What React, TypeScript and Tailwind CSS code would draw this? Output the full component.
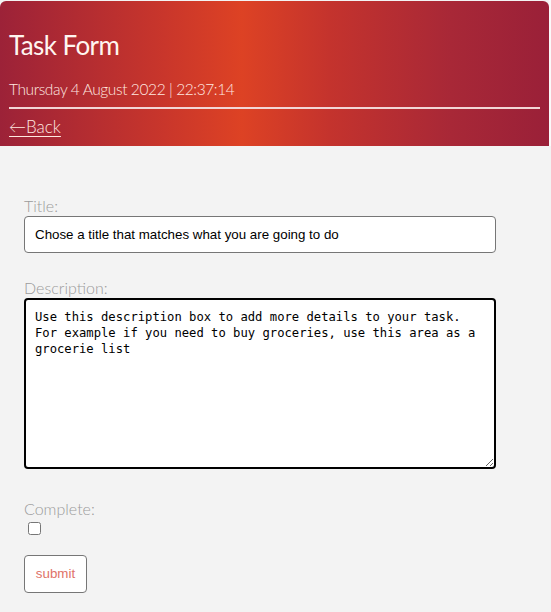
import React from "react";

export default function App() {
  const raleway = { fontFamily: "Lato, 'Open Sans', sans-serif" };
  return (
    <div className="w-[551px] h-[612px] bg-[#f3f3f3] overflow-hidden">
      <div className="flex">
        <div
          className="w-[549px] h-[145px] mt-px rounded-t-[6px] bg-[linear-gradient(90deg,#9c2238_0%,#c9362b_30%,#dd4224_44%,#c4332d_60%,#a82837_82%,#9a2038_100%)] pl-[9px] pr-[9px] pt-[28px] text-white"
          style={raleway}
        >
          <h1 className="text-[26px] font-normal leading-[32px] tracking-[-0.6px] text-[#fff5f0]">Task Form</h1>
          <div className="mt-[18px] text-[15.5px] font-light leading-[20px] tracking-[-0.4px] text-[#ffe8e0]">
            Thursday 4 August 2022 | 22:37:14
          </div>
          <div className="mt-[8px] h-[2px] bg-[#f2d6d6]" />
          <a href="#" className="block mt-[7px] text-[17px] font-light leading-[22px] underline underline-offset-[3px] text-[#ffe8e0]">
            ←Back
          </a>
        </div>
        <div className="w-[2px] bg-[#fafafa]" />
      </div>
      <form className="pl-[24px] pt-[50px] w-[520px]" onSubmit={(e) => e.preventDefault()}>
        <label className="block text-[16px] font-light leading-[20px] text-[#9b9b9b]" style={raleway}>
          Title:
        </label>
        <input
          type="text"
          defaultValue="Chose a title that matches what you are going to do"
          className="block w-[472px] h-[37px] border border-[#767676] rounded-[4px] bg-white px-[10px] text-[13.33px] text-black"
          style={{ fontFamily: "'Liberation Sans', Arial, sans-serif" }}
        />
        <label className="block mt-[25px] text-[16px] font-light leading-[20px] text-[#9b9b9b]" style={raleway}>
          Description:
        </label>
        <textarea
          defaultValue={
            "Use this description box to add more details to your task.\nFor example if you need to buy groceries, use this area as a\ngrocerie list"
          }
          className="block w-[472px] h-[171px] border-2 border-black rounded-[4px] bg-white px-[9px] pt-[9px] text-[12.2px] leading-[16px] text-black outline-none resize-y"
          style={{ fontFamily: "'DejaVu Sans Mono', monospace" }}
        />
        <label className="block mt-[30px] text-[16px] font-light leading-[20px] text-[#9b9b9b]" style={raleway}>
          Complete:
        </label>
        <input type="checkbox" className="block ml-[4px] mt-[3px] w-[13px] h-[13px]" />
        <button
          type="submit"
          className="block mt-[20px] w-[63px] h-[38px] border border-[#767676] rounded-[4px] bg-white text-[13.33px] text-[#e07268]"
          style={{ fontFamily: "'Liberation Sans', Arial, sans-serif" }}
        >
          submit
        </button>
      </form>
    </div>
  );
}
